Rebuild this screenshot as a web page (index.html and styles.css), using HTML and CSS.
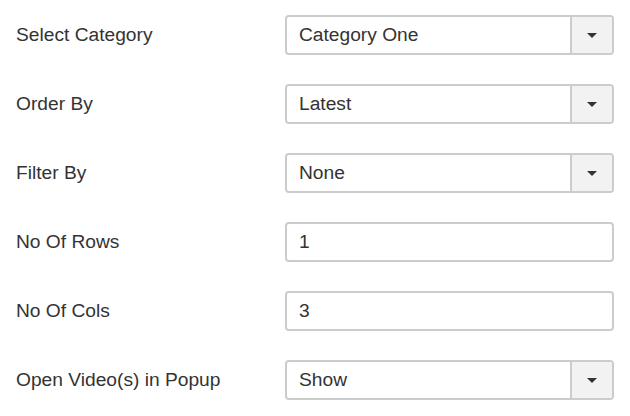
FILE: index.html
```html
<!DOCTYPE html>
<html>
<head>
<meta charset="utf-8">
<link rel="stylesheet" href="styles.css">
</head>
<body>
<div class="form">
  <div class="row">
    <label class="label">Select Category</label>
    <div class="control select"><span class="value">Category One</span><span class="btn"><span class="caret"></span></span></div>
  </div>
  <div class="row">
    <label class="label">Order By</label>
    <div class="control select"><span class="value">Latest</span><span class="btn"><span class="caret"></span></span></div>
  </div>
  <div class="row">
    <label class="label">Filter By</label>
    <div class="control select"><span class="value">None</span><span class="btn"><span class="caret"></span></span></div>
  </div>
  <div class="row">
    <label class="label">No Of Rows</label>
    <div class="control input"><span class="value">1</span></div>
  </div>
  <div class="row">
    <label class="label">No Of Cols</label>
    <div class="control input"><span class="value">3</span></div>
  </div>
  <div class="row">
    <label class="label">Open Video(s) in Popup</label>
    <div class="control select"><span class="value">Show</span><span class="btn"><span class="caret"></span></span></div>
  </div>
</div>
</body>
</html>
```

FILE: styles.css
```css
html, body {
  margin: 0;
  padding: 0;
  background: #fff;
}
body {
  font-family: "Liberation Sans", Arial, sans-serif;
  font-size: 19.2px;
  color: #333;
}
.form {
  display: flex;
  flex-direction: column;
  gap: 29px;
  padding: 15px 16px 0 16px;
}
.row {
  display: flex;
  align-items: center;
  height: 40px;
}
.label {
  width: 269px;
  flex: none;
}
.control {
  box-sizing: border-box;
  width: 329px;
  height: 40px;
  border: 2px solid #ccc;
  border-radius: 4px;
  display: flex;
  align-items: stretch;
  background: #fff;
  overflow: hidden;
}
.value {
  flex: 1;
  display: flex;
  align-items: center;
  padding-left: 12px;
}
.btn {
  width: 40px;
  flex: none;
  border-left: 2px solid #ccc;
  background: #f2f2f2;
  display: flex;
  align-items: center;
  justify-content: center;
}
.caret {
  width: 0;
  height: 0;
  border-left: 5px solid transparent;
  border-right: 5px solid transparent;
  border-top: 5px solid #333;
}
```
